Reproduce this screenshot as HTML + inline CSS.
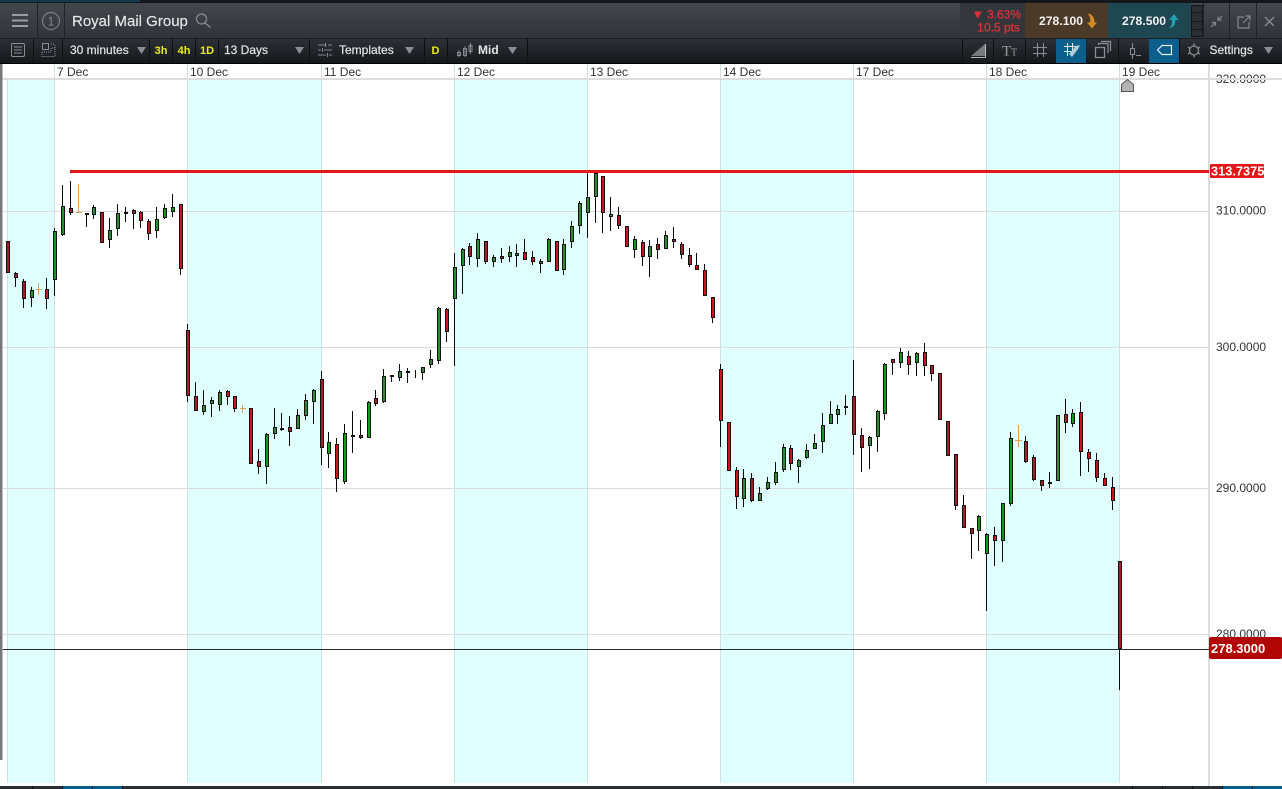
<!DOCTYPE html>
<html><head><meta charset="utf-8"><title>Royal Mail Group</title>
<style>html,body{margin:0;padding:0;background:#fff;overflow:hidden}svg{display:block}text{font-family:"Liberation Sans",sans-serif}</style>
</head><body>
<svg width="1282" height="789" viewBox="0 0 1282 789" xmlns="http://www.w3.org/2000/svg">
<defs>
<linearGradient id="r1" x1="0" y1="0" x2="0" y2="1"><stop offset="0" stop-color="#43484e"/><stop offset="1" stop-color="#30343a"/></linearGradient>
<linearGradient id="r2" x1="0" y1="0" x2="0" y2="1"><stop offset="0" stop-color="#2d3137"/><stop offset="1" stop-color="#15181c"/></linearGradient>
</defs>
<rect width="1282" height="789" fill="#fff"/>
<!-- left strip -->
<rect x="0" y="64" width="2.5" height="696" fill="#77797c"/>
<!-- bands -->
<g fill="#e0ffff">
<rect x="7" y="79" width="47" height="704"/><rect x="188" y="79" width="133" height="704"/><rect x="455" y="79" width="132" height="704"/><rect x="721" y="79" width="132" height="704"/><rect x="987" y="79" width="132" height="704"/>
</g>
<g stroke="#cfe0e2" stroke-width="1" fill="none" shape-rendering="crispEdges">
<path d="M7.5 79V783M54.5 64V783M187.5 64V783M321.5 64V783M454.5 64V783M587.5 64V783M720.5 64V783M853.5 64V783M986.5 64V783M1119.5 64V783"/>
<path stroke="#d8dedf" d="M3 211.5H1208M3 347.5H1208M3 488.5H1208M3 634.5H1208"/>
</g>
<!-- date axis -->
<g font-size="12" fill="#333">
<text x="57" y="76">7 Dec</text><text x="190" y="76">10 Dec</text><text x="324" y="76">11 Dec</text><text x="457" y="76">12 Dec</text><text x="590" y="76">13 Dec</text><text x="723" y="76">14 Dec</text><text x="856" y="76">17 Dec</text><text x="989" y="76">18 Dec</text><text x="1122" y="76">19 Dec</text>
<text x="1216" y="83">320.0000</text><text x="1216" y="214.500">310.0000</text><text x="1216" y="351">300.0000</text><text x="1216" y="492">290.0000</text><text x="1216" y="638">280.0000</text>
</g>
<rect x="3" y="78" width="1279" height="2" fill="#dcdcdc"/>
<rect x="1208" y="64" width="2" height="722" fill="#dcdcdc"/>
<!-- marker -->
<path d="M1121.500 91.500V84.500L1127.500 79.500L1133.500 84.500V91.500Z" fill="#b4b4b4" stroke="#555"/>
<!-- wicks -->
<path fill="none" stroke="#0a0a0a" stroke-width="1" shape-rendering="crispEdges" d="M15.5 272V287M23.5 279V308M31.5 287V307M46.5 278V309M54.5 228V296M62.5 185V236M70.5 181V215M86.5 213V227M93.5 205V219M109.500 218V248M117.500 204V236M125.500 207V222M133.500 209V229M140.500 211V228M148.500 219V240M156.500 207V238M164.500 204V219M172.500 194V217M180.500 204V275M187.500 324V402M195.500 382V411M203.500 390V415M211.500 397V417M219.500 390V411M227.500 390V405M234.500 396V412M258.500 449V474M266.500 433V484M274.500 408V439M281.500 413V431M289.500 416V446M297.500 409V429M305.500 394V420M313.500 389V424M321.500 371V465M328.500 432V468M336.500 438V492M344.500 424V484M352.500 411V453M360.500 420V439M368.500 401V438M375.500 390V406M383.500 369V403M391.500 375V382M399.500 364V381M407.500 368V383M415.500 370V378M422.500 367V380M430.500 350V368M438.500 307V364M446.500 308V342M454.500 253V366M462.500 248V294M469.500 243V265M477.500 233V267M485.500 241V264M493.500 255V267M501.500 248V263M509.500 246V262M516.500 244V267M524.500 239V260M532.500 251V265M540.500 259V273M548.500 238V262M563.500 239V275M571.500 221V248M579.500 201V234M587.500 171V238M595.500 171V223M602.500 176V233M610.500 197V231M618.500 207V229M634.500 236V258M642.500 240V266M649.500 240V277M657.500 238V259M665.500 231V249M673.500 227V248M681.500 242V259M689.500 248V267M696.500 253V270M704.500 264V296M712.500 297V323M720.500 364V447M736.500 467V509M743.500 469V507M751.500 473V502M759.500 487V501M767.500 477V490M775.500 462V485M783.500 444V472M790.500 445V470M798.500 459V483M806.500 444V459M814.500 434V449M822.500 413V453M830.500 401V424M837.500 405V424M845.500 395V415M853.500 360V455M861.500 428V472M869.500 436V469M877.500 410V452M884.500 363V420M892.500 359V375M900.500 348V368M908.500 351V375M916.500 352V376M924.500 343V376M931.500 365V381M955.500 454V510M963.500 495V528M971.500 528V559M978.500 515V551M986.500 533V611M994.500 527V566M1002.500 503V562M1010.500 432V506M1025.500 436V463M1033.500 455V481M1041.500 480V491M1049.500 472V488M1065.500 399V433M1072.500 409V427M1080.500 402V476M1088.500 449V472M1096.500 453V482M1104.500 473V486M1112.500 477V510M1119.500 561V690"/>
<!-- doji -->
<path fill="none" stroke="#dca050" stroke-width="1" shape-rendering="crispEdges" d="M38.5 283V295M36 289.500H42M78.5 184V213M76 212.500H82M242.500 405V413M240 408.500H246M1018.500 425V447M1015 440.500H1022"/>
<!-- dark red -->
<path fill="#a81c26" stroke="#111" shape-rendering="crispEdges" d="M6.5 241.5h3V272.5h-3zM14.5 273.5h3V277.5h-3zM22.5 281.5h3V298.5h-3zM85.5 213.5h3V214.5h-3zM132.5 210.5h3V213.5h-3zM100.5 212.5h3V242.5h-3zM186.5 330.5h3V395.5h-3zM194.5 396.5h3V410.5h-3zM288.5 427.5h3V431.5h-3zM320.5 379.5h3V447.5h-3zM359.5 435.5h3V437.5h-3zM374.5 398.5h3V403.5h-3zM468.5 246.5h3V256.5h-3zM484.5 241.5h3V261.5h-3zM500.5 256.5h3V258.5h-3zM617.5 215.5h3V225.5h-3zM656.5 244.5h3V249.5h-3zM672.5 239.5h3V241.5h-3zM680.5 244.5h3V254.5h-3zM688.5 255.5h3V264.5h-3zM750.5 478.5h3V500.5h-3zM852.5 396.5h3V434.5h-3zM860.5 435.5h3V447.5h-3zM891.5 359.5h3V362.5h-3zM930.5 365.5h3V373.5h-3zM938.5 373.5h3V419.5h-3zM946.5 421.5h3V455.5h-3zM954.5 454.5h3V505.5h-3zM962.5 505.5h3V527.5h-3zM970.5 528.5h3V533.5h-3zM1024.5 441.5h3V461.5h-3zM1032.5 457.5h3V479.5h-3zM1040.5 480.5h3V485.5h-3zM1064.5 414.5h3V422.5h-3zM1095.5 460.5h3V477.5h-3zM1118.5 561.5h3V648.5h-3z"/>
<!-- bright red -->
<path fill="#d0141e" stroke="#111" shape-rendering="crispEdges" d="M45.5 289.5h3V298.5h-3zM69.5 208.5h3V212.5h-3zM139.5 212.5h3V220.5h-3zM147.5 221.5h3V233.5h-3zM179.5 204.5h3V268.5h-3zM226.5 391.5h3V396.5h-3zM233.5 396.5h3V408.5h-3zM249.5 408.5h3V463.5h-3zM257.5 461.5h3V466.5h-3zM335.5 444.5h3V478.5h-3zM445.5 309.5h3V331.5h-3zM523.5 252.5h3V259.5h-3zM531.5 257.5h3V261.5h-3zM555.5 241.5h3V270.5h-3zM601.5 176.5h3V212.5h-3zM625.5 226.5h3V246.5h-3zM641.5 242.5h3V256.5h-3zM695.5 265.5h3V269.5h-3zM703.5 270.5h3V295.5h-3zM711.5 297.5h3V317.5h-3zM719.5 369.5h3V420.5h-3zM727.5 422.5h3V470.5h-3zM735.5 470.5h3V496.5h-3zM789.5 448.5h3V463.5h-3zM907.5 356.5h3V364.5h-3zM923.5 352.5h3V365.5h-3zM993.5 535.5h3V540.5h-3zM1079.5 412.5h3V451.5h-3zM1087.5 452.5h3V458.5h-3zM1103.5 478.5h3V485.5h-3zM1111.5 487.5h3V500.5h-3z"/>
<!-- bright green -->
<path fill="#139a1c" stroke="#111" shape-rendering="crispEdges" d="M53.5 231.5h3V279.5h-3zM61.5 206.5h3V234.5h-3zM163.5 208.5h3V217.5h-3zM155.5 219.5h3V230.5h-3zM171.5 207.5h3V211.5h-3zM265.5 434.5h3V466.5h-3zM327.5 442.5h3V453.5h-3zM343.5 433.5h3V481.5h-3zM367.5 402.5h3V437.5h-3zM437.5 308.5h3V360.5h-3zM453.5 267.5h3V298.5h-3zM461.5 249.5h3V265.5h-3zM547.5 239.5h3V261.5h-3zM633.5 239.5h3V249.5h-3zM805.5 450.5h3V457.5h-3zM813.5 443.5h3V448.5h-3zM821.5 425.5h3V441.5h-3zM829.5 414.5h3V423.5h-3zM883.5 364.5h3V413.5h-3zM899.5 352.5h3V362.5h-3zM915.5 353.5h3V362.5h-3zM977.5 516.5h3V530.5h-3zM985.5 534.5h3V553.5h-3zM1001.5 503.5h3V540.5h-3zM1009.5 438.5h3V503.5h-3zM1071.5 413.5h3V423.5h-3z"/>
<!-- muted green -->
<path fill="#2e8b35" stroke="#111" shape-rendering="crispEdges" d="M30.5 290.5h3V297.5h-3zM92.5 207.5h3V214.5h-3zM108.5 230.5h3V239.5h-3zM116.5 213.5h3V228.5h-3zM124.5 212.5h3V213.5h-3zM202.5 405.5h3V411.5h-3zM210.5 400.5h3V403.5h-3zM218.5 392.5h3V404.5h-3zM273.5 427.5h3V433.5h-3zM280.5 428.5h3V429.5h-3zM296.5 415.5h3V428.5h-3zM304.5 400.5h3V415.5h-3zM312.5 390.5h3V401.5h-3zM351.5 435.5h3V436.5h-3zM382.5 376.5h3V401.5h-3zM390.5 375.5h3V376.5h-3zM398.5 371.5h3V377.5h-3zM406.5 371.5h3V372.5h-3zM421.5 367.5h3V372.5h-3zM429.5 359.5h3V364.5h-3zM476.5 239.5h3V258.5h-3zM492.5 257.5h3V261.5h-3zM508.5 252.5h3V256.5h-3zM515.5 253.5h3V255.5h-3zM539.5 261.5h3V263.5h-3zM562.5 244.5h3V269.5h-3zM570.5 226.5h3V241.5h-3zM578.5 203.5h3V225.5h-3zM586.5 197.5h3V212.5h-3zM594.5 173.5h3V196.5h-3zM609.5 214.5h3V216.5h-3zM648.5 246.5h3V256.5h-3zM664.5 235.5h3V248.5h-3zM742.5 478.5h3V498.5h-3zM758.5 493.5h3V500.5h-3zM766.5 482.5h3V488.5h-3zM774.5 472.5h3V482.5h-3zM782.5 447.5h3V469.5h-3zM797.5 460.5h3V466.5h-3zM836.5 409.5h3V414.5h-3zM844.5 406.5h3V407.5h-3zM868.5 437.5h3V445.5h-3zM876.5 411.5h3V436.5h-3zM1048.5 482.5h3V483.5h-3zM1056.5 415.5h3V480.5h-3z"/>
<!-- red level -->
<rect x="70" y="170" width="1139" height="3" fill="#e31717"/>
<rect x="1210" y="164" width="54" height="14" rx="1" fill="#e31717"/>
<text x="1211" y="175.500" font-size="12.800" font-weight="bold" fill="#fff">313.7375</text>
<!-- current price -->
<rect x="3" y="649" width="1206" height="1" fill="#2a2a2a"/>
<rect x="1209" y="637" width="73" height="22" rx="2" fill="#b10606"/>
<text x="1211" y="653" font-size="13" font-weight="bold" fill="#fff">278.3000</text>
<!-- top chrome -->
<rect width="1282" height="3" fill="#14181d"/>
<rect x="0" y="0" width="140" height="2" fill="#123a4c"/>
<rect y="3" width="1282" height="35" fill="url(#r1)"/>
<rect y="38" width="1282" height="1" fill="#1b1e22"/>
<rect y="39" width="1282" height="24" fill="url(#r2)"/>
<rect y="63" width="1282" height="1" fill="#000"/>
<!-- row 1 left -->
<g shape-rendering="crispEdges" fill="#202327"><rect x="37" y="3" width="1" height="35"/><rect x="64" y="3" width="1" height="35"/></g>
<path d="M12 15H28M12 20.500H28M12 26H28" stroke="#9a9da1" stroke-width="2" fill="none"/>
<circle cx="51" cy="21" r="8.500" fill="none" stroke="#7a7d81" stroke-width="1.200"/>
<text x="51" y="25.500" font-size="12" fill="#85888c" text-anchor="middle">1</text>
<text x="72" y="26" font-size="15" fill="#e6e7e8" stroke="#e6e7e8" stroke-width=".15">Royal Mail Group</text>
<circle cx="201.500" cy="19" r="5" fill="none" stroke="#8a8d91" stroke-width="1.200"/>
<path d="M205 23L210.500 27.500" stroke="#8a8d91" stroke-width="1.300"/>
<!-- row 1 right -->
<rect x="960" y="3" width="65" height="35" fill="#33373c"/>
<rect x="1025" y="3" width="83" height="35" fill="#4b3a28"/>
<rect x="1108" y="3" width="83" height="35" fill="#1f4751"/>
<text x="1021" y="18.500" font-size="12" fill="#e0303a" stroke="#e0303a" stroke-width=".25" text-anchor="end">▼ 3.63%</text>
<text x="1020" y="31.500" font-size="12" fill="#e0303a" stroke="#e0303a" stroke-width=".25" text-anchor="end">10.5 pts</text>
<text x="1039" y="25" font-size="12.200" font-weight="bold" fill="#f2f2f2">278.100</text>
<path d="M1087.500 13.500C1092 14 1094.500 17 1094.500 22.500H1097L1092 28.500L1087 22.500H1090C1090.500 19 1090 16 1087.500 13.500Z" fill="#d18a25"/>
<text x="1122" y="25" font-size="12.200" font-weight="bold" fill="#f2f2f2">278.500</text>
<path d="M1168.500 28C1171.500 27 1172 24 1172 20H1169L1174 14L1178.500 20H1175.500C1175.500 25 1173 28 1168.500 28Z" fill="#1ea3b0"/>
<g fill="#2b2f33" stroke="#15181b" shape-rendering="crispEdges"><rect x="1191.500" y="5.500" width="11" height="7"/><rect x="1191.500" y="12.500" width="11" height="9"/><rect x="1191.500" y="21.500" width="11" height="8"/><rect x="1191.500" y="29.500" width="11" height="7"/></g>
<g fill="#202327" shape-rendering="crispEdges"><rect x="1203" y="3" width="1" height="35"/><rect x="1229" y="3" width="1" height="35"/><rect x="1256" y="3" width="1" height="35"/></g>
<path d="M1211 27L1215 23M1212 22.500H1215.500V26M1222 16L1218 20M1218 16.500V20H1221.500" stroke="#85888c" stroke-width="1.200" fill="none"/>
<path d="M1244 17H1238V28H1249V22M1243 23L1250 16M1245.500 16H1250V20.500" stroke="#85888c" stroke-width="1.200" fill="none"/>
<path d="M1265 17L1274 26M1274 17L1265 26" stroke="#85888c" stroke-width="1.500" fill="none"/>
<!-- row 2 dividers -->
<g fill="#0c0e10" shape-rendering="crispEdges"><rect x="33" y="39" width="1" height="24"/><rect x="62" y="39" width="1" height="24"/><rect x="149" y="39" width="1" height="24"/><rect x="172" y="39" width="1" height="24"/><rect x="195" y="39" width="1" height="24"/><rect x="218" y="39" width="1" height="24"/><rect x="309" y="39" width="1" height="24"/><rect x="424" y="39" width="1" height="24"/><rect x="447" y="39" width="1" height="24"/><rect x="527" y="39" width="1" height="24"/><rect x="962" y="39" width="1" height="24"/><rect x="993" y="39" width="1" height="24"/><rect x="1025" y="39" width="1" height="24"/><rect x="1118" y="39" width="1" height="24"/><rect x="1179" y="39" width="1" height="24"/></g>
<rect x="1056" y="39" width="30" height="24" fill="#0c5e8c"/>
<rect x="1149" y="39" width="30" height="24" fill="#0c5e8c"/>
<!-- row 2 left icons -->
<rect x="11.500" y="43.500" width="13" height="13" rx="1.500" fill="none" stroke="#8b8e92"/>
<path d="M14 47H22M14 50H22M14 53H22" stroke="#8b8e92" fill="none"/>
<path d="M42.500 43.500H48.500V49.500H42.500Z" fill="none" stroke="#8b8e92"/>
<path d="M51 44H55M42 52V56.500H55V44.500M55 48H51V52H42" stroke="#8b8e92" stroke-dasharray="1 1" fill="none"/>
<g font-size="12" fill="#e2e3e4" stroke="#e2e3e4" stroke-width=".2">
<text x="70" y="54">30 minutes</text><text x="224" y="54">13 Days</text><text x="339" y="54">Templates</text>
<text x="1209.500" y="54">Settings</text>
</g>
<text x="478" y="54" font-size="12" font-weight="bold" fill="#e2e3e4">Mid</text>
<g font-size="11" font-weight="bold" fill="#ecec1c" text-anchor="middle"><text x="161" y="54">3h</text><text x="184" y="54">4h</text><text x="207" y="54">1D</text><text x="435.500" y="54">D</text></g>
<g fill="#8b8e92"><path d="M137 47H146L141.500 54Z"/><path d="M295 47H304L299.500 54Z"/><path d="M405 47H414L409.500 54Z"/><path d="M508 47H517L512.500 54Z"/><path d="M1264 47H1273L1268.500 54Z"/></g>
<!-- templates icon -->
<path d="M318 45H325M328 45H332M318 50H321M324 50H332M318 55H326M329 55H332M325.500 43V47M322.500 48V52M327.500 53V57" stroke="#85888c" fill="none"/>
<!-- mid icon -->
<path d="M457.500 52.500h3v3h-3zM463.500 48.500h3v7h-3zM469 45.500h3v6h-3zM459 50V57M465 46V57M470.500 43V54" stroke="#85888c" fill="none"/>
<!-- right icons -->
<path d="M971 56L985 44V56Z" fill="#77797d"/><path d="M971 57.500H986M985.500 44V57" stroke="#b4b6b9" fill="none"/>
<text x="1002" y="55.500" font-size="15" fill="#9a9da0" style="font-family:'Liberation Serif',serif">T</text><text x="1011" y="55.500" font-size="10" fill="#9a9da0" style="font-family:'Liberation Serif',serif">T</text>
<path d="M1037.500 43V57M1043.500 43V57M1033 47.500H1047M1033 53.500H1047" stroke="#8b8e92" fill="none"/>
<path d="M1067.500 43V56M1072.500 43V52M1064 46.500H1077M1064 51.500H1072" stroke="#e6eef2" fill="none"/>
<path d="M1072 57L1078 49L1080 45L1076 46L1069 54Z" fill="#b6cdd9"/>
<path d="M1095.500 47.500H1104.500V57.500H1095.500Z" fill="none" stroke="#8b8e92" stroke-width="1.300"/><path d="M1098.500 45V43.500H1108V53M1101 41.500H1110.500V51" stroke="#8b8e92" fill="none" stroke-width="1.200"/>
<rect x="1130.500" y="48.500" width="4" height="6" fill="none" stroke="#8b8e92"/><path d="M1132.500 43V48M1132.500 55V59M1136 55.500H1141" stroke="#8b8e92" fill="none"/>
<path d="M1157.500 50L1162 45.500H1171.500V54.500H1162Z" fill="none" stroke="#e6eef2" stroke-width="1.200"/>
<circle cx="1194" cy="50.500" r="4.500" fill="none" stroke="#8b8e92" stroke-width="1.200"/>
<path d="M1194 43.500V46M1194 55V57.500M1188 47L1190 48.500M1198 52.500L1200 54M1188 54L1190 52.500M1198 48.500L1200 47" stroke="#8b8e92" stroke-width="1.300" fill="none"/>
<!-- bottom bar -->
<rect y="786" width="1282" height="3" fill="#2a2e33"/>
<rect x="62" y="786" width="60" height="3" fill="#0c5e8c"/>
<rect x="1222" y="786" width="60" height="3" fill="#0c5e8c"/>
<g fill="#0b0d0f"><rect x="32" y="786" width="1" height="3"/><rect x="62" y="786" width="1" height="3"/><rect x="92" y="786" width="1" height="3"/><rect x="122" y="786" width="1" height="3"/><rect x="1132" y="786" width="1" height="3"/><rect x="1162" y="786" width="1" height="3"/><rect x="1192" y="786" width="1" height="3"/><rect x="1222" y="786" width="1" height="3"/><rect x="1252" y="786" width="1" height="3"/></g>
</svg>
</body></html>
